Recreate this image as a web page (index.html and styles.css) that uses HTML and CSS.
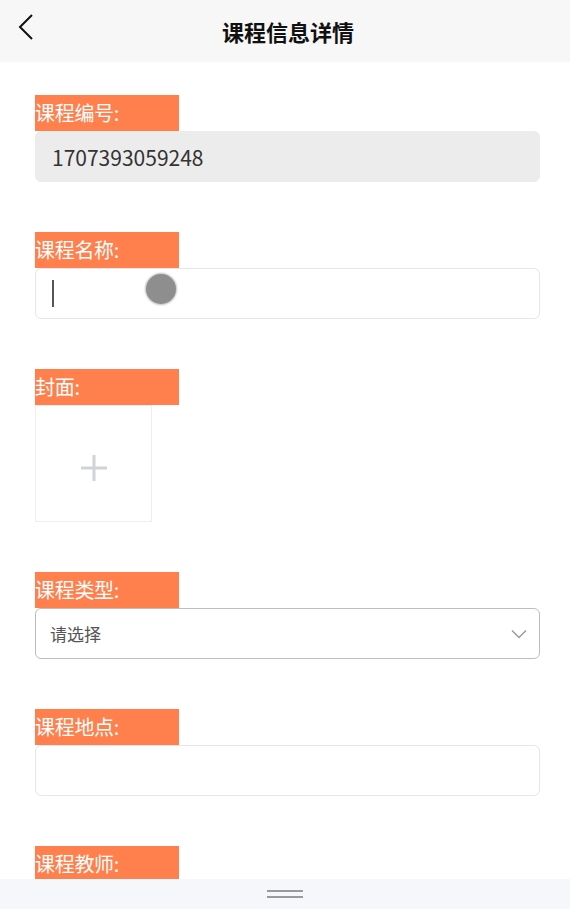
FILE: index.html
```html
<!DOCTYPE html>
<html lang="zh-CN">
<head>
  <meta charset="UTF-8" />
  <meta name="viewport" content="width=device-width, initial-scale=1.0"/>
  <title>课程信息详情</title>
  <link rel="stylesheet" href="styles.css">
</head>
<body>
  <header class="navbar">
    <span class="back">
      <svg width="16" height="26" viewBox="0 0 16 26"><path d="M14 1 L2 13 L14 25" fill="none" stroke="#111" stroke-width="2"/></svg>
    </span>
    <h1>课程信息详情</h1>
  </header>

  <form class="detail">
    <div class="field">
      <label class="tag">课程编号:</label>
      <div class="input readonly">1707393059248</div>
    </div>

    <div class="field">
      <label class="tag">课程名称:</label>
      <div class="input">
        <span class="caret"></span>
        <span class="touch"></span>
      </div>
    </div>

    <div class="field">
      <label class="tag">封面:</label>
      <div class="upload">
        <svg width="28" height="28" viewBox="0 0 28 28"><path d="M14 1 V27 M1 14 H27" stroke="#d0d3d8" stroke-width="3"/></svg>
      </div>
    </div>

    <div class="field">
      <label class="tag">课程类型:</label>
      <div class="input select">
        <span>请选择</span>
        <svg width="16" height="10" viewBox="0 0 16 10"><path d="M1 1.5 L8 8.5 L15 1.5" fill="none" stroke="#999" stroke-width="1.4"/></svg>
      </div>
    </div>

    <div class="field">
      <label class="tag">课程地点:</label>
      <div class="input"></div>
    </div>

    <div class="field">
      <label class="tag">课程教师:</label>
      <div class="input"></div>
    </div>
  </form>

  <div class="handle-bar">
    <span></span>
    <span></span>
  </div>
</body>
</html>
```

FILE: styles.css
```css
body {
  margin: 0;
  padding: 0;
  background: #fff;
  font-family: "Noto Sans CJK SC", "Noto Sans", sans-serif;
  color: #333;
  overflow: hidden;
  height: 909px;
}

.navbar {
  height: 62px;
  background: #f7f7f7;
  display: flex;
  align-items: center;
  justify-content: center;
  position: relative;
}

.navbar h1 {
  margin: 0;
  font-size: 22px;
  font-weight: bold;
  color: #111;
  padding-left: 6px;
}

.back {
  position: absolute;
  left: 18px;
  top: 14px;
}

.detail {
  padding: 33px 30px 0 35px;
  display: flex;
  flex-direction: column;
  gap: 50px;
}

.tag {
  display: block;
  width: 144px;
  height: 36px;
  line-height: 36px;
  background: #ff7f4d;
  color: #fff;
  font-size: 20px;
  letter-spacing: -0.3px;
  white-space: nowrap;
}

.input {
  box-sizing: border-box;
  height: 51px;
  border: 1px solid #e6e6e6;
  border-radius: 6px;
  display: flex;
  align-items: center;
  padding: 0 16px;
  position: relative;
}

.readonly {
  background: #ececec;
  border-color: #ececec;
  font-size: 21px;
  color: #333;
}

.caret {
  width: 2px;
  height: 27px;
  background: #555;
}

.touch {
  position: absolute;
  left: 110px;
  top: 5px;
  width: 30px;
  height: 30px;
  border-radius: 50%;
  background: #8e8e8e;
  box-shadow: 0 0 2px 1px rgba(0,0,0,0.25);
}

.upload {
  box-sizing: border-box;
  width: 117px;
  height: 117px;
  padding-top: 8px;
  border: 1px solid #eee;
  display: flex;
  align-items: center;
  justify-content: center;
}

.select {
  border-color: #bdbdbd;
  justify-content: space-between;
  padding: 0 12px 0 14px;
  font-size: 17px;
  color: #555;
}

.handle-bar {
  position: fixed;
  left: 0;
  right: 0;
  bottom: 0;
  height: 30px;
  background: #f6f7fb;
  display: flex;
  flex-direction: column;
  align-items: center;
  justify-content: center;
  gap: 4px;
}

.handle-bar span {
  display: block;
  width: 36px;
  height: 2px;
  background: #9a9a9a;
}
```
